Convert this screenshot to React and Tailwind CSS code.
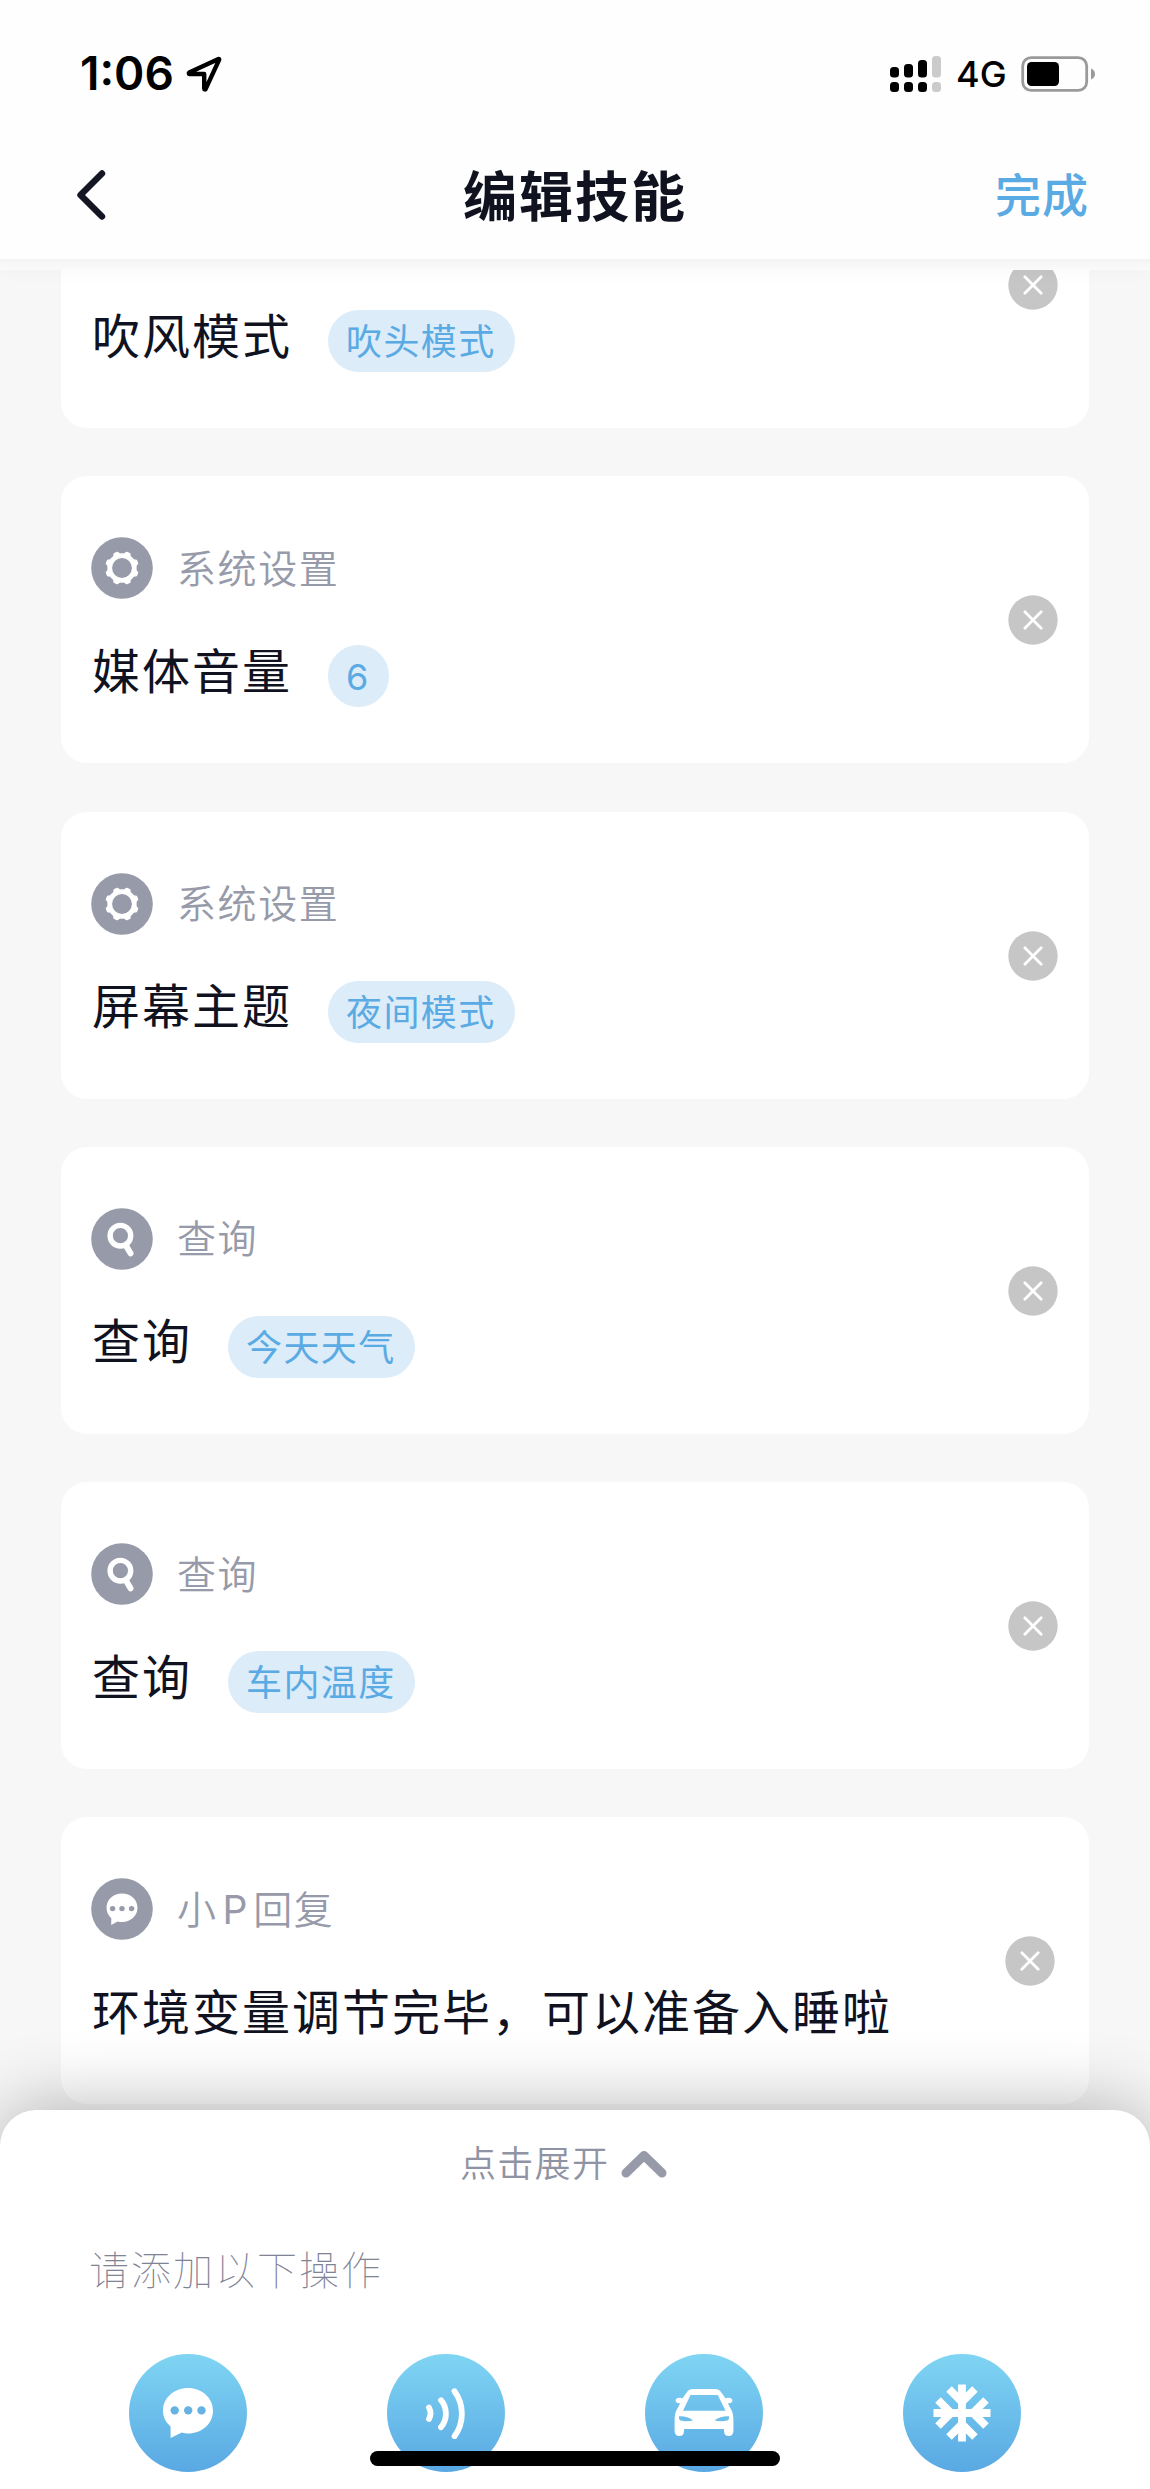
import { useState } from "react";

const initialActions = [
  { id: 1, icon: "gear", category: "空调", title: "吹风模式", value: "吹头模式" },
  { id: 2, icon: "gear", category: "系统设置", title: "媒体音量", value: "6" },
  { id: 3, icon: "gear", category: "系统设置", title: "屏幕主题", value: "夜间模式" },
  { id: 4, icon: "search", category: "查询", title: "查询", value: "今天天气" },
  { id: 5, icon: "search", category: "查询", title: "查询", value: "车内温度" },
  { id: 6, icon: "reply", category: <>小<span className="ml-[5px] mr-[4px] font-normal">P</span>回复</>, title: "环境变量调节完毕，可以准备入睡啦" },
];

function GearIcon() {
  const teeth = [22.5, 67.5, 112.5, 157.5, 202.5, 247.5, 292.5, 337.5];
  return (
    <svg viewBox="0 0 62 62" className="w-[62px] h-[62px]">
      <circle cx="31" cy="31" r="30.8" fill="#969AA9" />
      {teeth.map((a) => (
        <path key={a} d="M26.6 18.5L28.4 14.8Q28.8 14.1 29.5 14.1H32.5Q33.2 14.1 33.6 14.8L35.4 18.5Z" fill="#fff" transform={`rotate(${a} 31 31)`} />
      ))}
      <circle cx="31" cy="31" r="12.3" fill="none" stroke="#fff" strokeWidth="4.8" />
    </svg>
  );
}

function SearchIcon() {
  return (
    <svg viewBox="0 0 62 62" className="w-[62px] h-[62px]">
      <circle cx="31" cy="31" r="30.8" fill="#969AA9" />
      <circle cx="29.4" cy="27.7" r="10.3" fill="none" stroke="#fff" strokeWidth="5.4" />
      <path d="M35.5 38.5L39.5 45.3" stroke="#fff" strokeWidth="6" strokeLinecap="round" />
    </svg>
  );
}

function ReplyIcon() {
  return (
    <svg viewBox="0 0 62 62" className="w-[62px] h-[62px]">
      <circle cx="31" cy="31" r="30.8" fill="#969AA9" />
      <path d="M31 15.5C39.5 15.5 46.5 21.4 46.5 29.8C46.5 38 39.6 44 31 44C29.4 44 28 43.8 26.6 43.4L20.2 47L20.3 40.2C17.2 37.6 15.5 34 15.5 29.8C15.5 21.4 22.5 15.5 31 15.5Z" fill="#fff" />
      <circle cx="21.6" cy="30.6" r="2.7" fill="#969AA9" />
      <circle cx="31" cy="30.6" r="2.7" fill="#969AA9" />
      <circle cx="40.6" cy="30.6" r="2.7" fill="#969AA9" />
    </svg>
  );
}

const icons = { gear: GearIcon, search: SearchIcon, reply: ReplyIcon };

function StatusBar() {
  return (
    <div className="flex items-center justify-between h-[147px] pl-[80px] pr-[54px] text-black">
      <div className="flex items-center">
        <span className="w-[106px] pb-px text-[46px] leading-none font-semibold">1:06</span>
        <svg viewBox="0 0 36 36" className="w-9 h-9">
          <path d="M32.5 3L3.2 16.6C2.6 17 2.8 18 3.5 18H18.2V32.6C18.2 33.6 19.3 33.7 19.7 32.9L33.2 3.7C33.4 3.2 33 2.8 32.5 3Z" fill="none" stroke="#000" strokeWidth="4.4" strokeLinejoin="round" />
        </svg>
      </div>
      <div className="flex items-center">
        <svg viewBox="0 0 51 36" className="w-[51px] h-9">
          <rect x="0" y="11" width="9" height="10.5" rx="3.5" />
          <rect x="14" y="8" width="9" height="13.5" rx="3.5" />
          <rect x="28" y="4" width="9" height="17.5" rx="3.5" />
          <rect x="42" y="0" width="9" height="21.5" rx="3.5" fill="#CBCBCB" />
          <rect x="0" y="26" width="9" height="10" rx="3.5" />
          <rect x="14" y="26" width="9" height="10" rx="3.5" />
          <rect x="28" y="26" width="9" height="10" rx="3.5" />
          <rect x="42" y="26" width="9" height="10" rx="3.5" fill="#CBCBCB" />
        </svg>
        <span className="w-[65px] ml-[15px] text-[36px] leading-none font-medium">4G</span>
        <svg viewBox="0 0 75 36" className="w-[75px] h-9">
          <rect x="1.7" y="1.6" width="64" height="32.8" rx="8.5" fill="none" stroke="#9A9A9A" strokeWidth="2.8" />
          <rect x="6" y="6" width="32" height="24" rx="4.5" />
          <path d="M70 12.5Q74 14.2 74 18T70 23.5Z" fill="#9A9A9A" />
        </svg>
      </div>
    </div>
  );
}

function Header() {
  return (
    <div className="relative z-10 bg-[#fefefe] shadow-[0_0_20px_rgba(0,0,0,0.03)]">
      <StatusBar />
      <div className="grid grid-cols-3 items-center h-[112px] px-[61px] pb-[16px] text-[#10131f]">
        <button className="justify-self-start ml-[14px]">
          <svg viewBox="0 0 32 52" className="w-8 h-[52px]">
            <path d="M27 4.5L5.5 26L27 47.5" fill="none" stroke="#141723" strokeWidth="6.4" strokeLinecap="round" strokeLinejoin="round" />
          </svg>
        </button>
        <h1 className="justify-self-center whitespace-nowrap pt-[5px] text-[54px] leading-none font-bold tracking-[2px]">编辑技能</h1>
        <button className="justify-self-end text-[46px] leading-none font-medium tracking-[1px] text-[#5aaae3]">完成</button>
      </div>
      <div className="h-[11px] bg-linear-to-b from-[#f4f4f4] to-[#fafafa]" />
    </div>
  );
}

function RemoveButton({ onClick }) {
  return (
    <button onClick={onClick} className="shrink-0 pt-px">
      <svg viewBox="0 0 50 50" className="w-[50px] h-[50px]">
        <circle cx="25" cy="25" r="24.7" fill="#C6C6C6" />
        <path d="M16.8 16.8L33.2 33.2M33.2 16.8L16.8 33.2" stroke="#fff" strokeWidth="2.8" strokeLinecap="round" />
      </svg>
    </button>
  );
}

function ActionCard({ action, onRemove }) {
  const Icon = icons[action.icon];
  return (
    <div className="flex items-center justify-between shrink-0 h-[287px] rounded-[26px] bg-white pl-[30px] pr-[31px] last:pr-[34px]">
      <div className="flex flex-col h-full pt-[61px]">
        <div className="flex items-center gap-[24px] h-[62px]">
          <Icon />
          <span className="text-[39px] leading-none font-[350] tracking-[1.6px] text-[#969aa9]">{action.category}</span>
        </div>
        <div className="flex items-center gap-[36px] h-[62px] mt-[46px] pl-px">
          <span className="pb-[9px] whitespace-nowrap text-[48px] leading-none tracking-[2px] text-[#10131f]">{action.title}</span>
          {action.value && (
            <span className="flex items-center h-[62px] pl-[18px] pr-[19px] pt-[2px] rounded-full bg-[#dcecf9] text-[36px] leading-none font-[380] tracking-[1.4px] text-[#5aaae3]">
              {action.value}
            </span>
          )}
        </div>
      </div>
      <RemoveButton onClick={onRemove} />
    </div>
  );
}

function ActionCircle({ children }) {
  return (
    <button className="flex items-center justify-center w-[118px] h-[118px] rounded-full bg-linear-to-b from-[#80d5f3] to-[#59a8e3]">
      {children}
    </button>
  );
}

function BottomSheet() {
  return (
    <div className="relative z-10 shrink-0 h-[379px] rounded-t-[36px] bg-white shadow-[0_0_76px_rgba(0,0,0,0.31)]">
      <button className="flex items-center gap-[12px] h-[106px] ml-[460px] pt-[2px] text-[36px] leading-none font-[350] tracking-[1.3px] text-[#8f93a3]">
        点击展开
        <svg viewBox="0 0 46 30" className="w-[46px] h-[30px]">
          <path d="M5 24L23 6.5L41 24" fill="none" stroke="#969AA9" strokeWidth="9" strokeLinecap="round" strokeLinejoin="round" />
        </svg>
      </button>
      <p className="h-[108px] pl-[89px] pt-[35px] text-[40px] leading-none font-thin tracking-[2px] text-[#7f8394]">请添加以下操作</p>
      <div className="flex gap-[140px] mt-[30px] pl-[129px]">
        <ActionCircle>
          <svg viewBox="0 0 50 50" className="w-[50px] h-[50px]">
            <path d="M25 0C38.8 0 50 9.8 50 22.8S38.8 45.6 25 45.6C22.8 45.6 20.8 45.2 18.8 44.6L7.6 50V38.4C2.8 34.6 0 29 0 22.8C0 9.8 11.2 0 25 0Z" fill="#fff" />
            <circle cx="11.7" cy="22.4" r="4.2" fill="#66B3E3" />
            <circle cx="25.2" cy="22.4" r="4.2" fill="#66B3E3" />
            <circle cx="38.5" cy="22.4" r="4.2" fill="#66B3E3" />
          </svg>
        </ActionCircle>
        <ActionCircle>
          <svg viewBox="0 0 40 52" className="w-[40px] h-[52px]" fill="none" stroke="#fff" strokeWidth="5.8" strokeLinecap="round">
            <path d="M3 20.6A12 12 0 0 1 3 32" />
            <path d="M15 13.2A21 21 0 0 1 15 40.2" />
            <path d="M28.5 4.2A38 38 0 0 1 28.5 49.2" />
          </svg>
        </ActionCircle>
        <ActionCircle>
          <svg viewBox="0 0 60 48" className="w-[60px] h-[48px]">
            <path d="M19 0H41Q45 0 47 3L51.5 9.2Q53 8.6 55 8.8Q58.3 9.2 58.4 11.6Q58.2 14.2 54.8 14.2H54Q55 17.5 57.2 20.5Q59.3 24 59.4 31V42Q59.2 47 54.8 47Q50.6 47 50.2 43.5L49.8 40H10.2L9.8 43.5Q9.4 47 5.2 47Q.8 47 .6 42V31Q.7 24 2.8 20.5Q5 17.5 6 14.2H5.2Q1.8 14.2 1.6 11.6Q1.7 9.2 5 8.8Q7 8.6 8.5 9.2L13 3Q15 0 19 0ZM16.5 6L9 21.8H51.5L43.8 6ZM5 27.2Q4.6 31 7 31.6Q13 33.2 19.2 31.2Q12.5 26.6 5 27.2ZM55 27.2Q47.5 26.6 40.5 31.2Q47 33.2 53 31.6Q55.4 31 55 27.2Z" fill="#fff" fillRule="evenodd" />
          </svg>
        </ActionCircle>
        <ActionCircle>
          <svg viewBox="-29 -29 58 58" className="w-[58px] h-[58px]" fill="none" stroke="#fff" strokeWidth="7.8">
            <path d="M0 -28.5V28.5M-28.5 0H28.5" />
            <path d="M-13 -24L0 -11L13 -24M-13 24L0 11L13 24M-24 -13L-11 0L-24 13M24 -13L11 0L24 13" />
          </svg>
        </ActionCircle>
      </div>
      {/* home indicator */}
      <div className="absolute bottom-[23px] left-[370px] w-[410px] h-[15px] rounded-full bg-black" />
    </div>
  );
}

export default function App() {
  const [actions, setActions] = useState(initialActions);

  const removeAction = (id) => {
    setActions((prev) => prev.filter((a) => a.id !== id));
  };

  return (
    <div className="flex flex-col w-[1150px] h-[2489px] overflow-hidden bg-[#f7f7f7] font-[Inter,'Noto_Sans_CJK_SC',sans-serif]">
      <Header />
      <div className="flex-1 min-h-0 px-[61px]">
        <div className="flex flex-col gap-[48.3px] -mt-[129px]">
          {actions.map((action) => (
            <ActionCard key={action.id} action={action} onRemove={() => removeAction(action.id)} />
          ))}
        </div>
      </div>
      <BottomSheet />
    </div>
  );
}
